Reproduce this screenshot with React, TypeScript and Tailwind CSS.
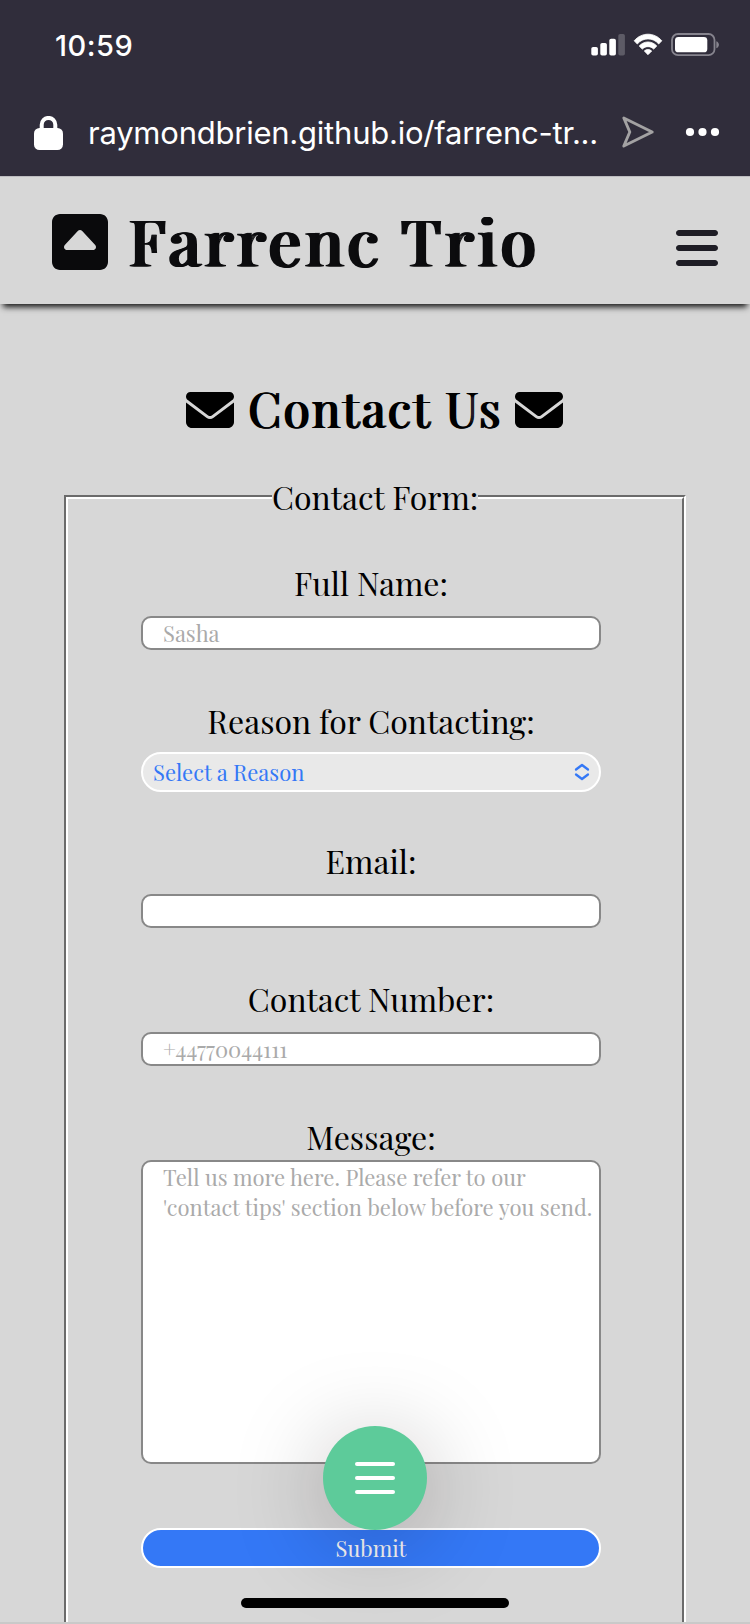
import { FaBars, FaEnvelope, FaSquareCaretUp } from "react-icons/fa6";

const serif = "font-['Playfair_Display','Liberation_Serif',serif]";
const label = "text-center text-[32px] leading-10 whitespace-nowrap";
const field =
  "block h-[34px] w-[460px] rounded-[10px] border-2 border-[#888888] bg-white pl-5 text-[22px] leading-[30px] text-[#aaaaaa] whitespace-nowrap";

function StatusBar() {
  return (
    <div className="flex h-[88px] items-start pl-[55px] pr-[30px] pt-[33px]">
      <span className="mt-[-5px] text-[29px] leading-[36px] font-medium tracking-[0.5px]">10:59</span>
      <svg className="ml-auto" width="130" height="24" viewBox="590 33 130 24" fill="white">
        <rect x="591.3" y="47" width="6.6" height="8.5" rx="1.8" />
        <rect x="600.3" y="43" width="6.6" height="12.5" rx="1.8" />
        <rect x="609.3" y="38.7" width="6.6" height="16.8" rx="1.8" />
        <rect x="618.3" y="34" width="6.6" height="21.5" rx="1.8" opacity="0.22" />
        <path d="M634.2 40.8C641.5 32 654.5 32 661.8 40.8L658.7 44C653 37.2 643 37.2 637.3 44Z" stroke="white" strokeWidth="0.8" strokeLinejoin="round" />
        <path d="M639.2 46C644.2 40.6 651.8 40.6 656.8 46L653.7 49.1C650.5 45.8 645.5 45.8 642.3 49.1Z" stroke="white" strokeWidth="0.8" strokeLinejoin="round" />
        <path d="M644.3 51C646.3 49.1 649.7 49.1 651.7 51L648 54.7Z" stroke="white" strokeWidth="0.8" strokeLinejoin="round" />
        <rect x="672" y="34" width="42.5" height="21.2" rx="6" fill="none" stroke="#86848e" strokeWidth="1.8" />
        <rect x="675" y="37" width="32.3" height="15.3" rx="3.4" />
        <path d="M716.3 41.2C719.8 42.4 719.8 47 716.3 48.2Z" fill="#86848e" />
      </svg>
    </div>
  );
}

function AddressBar() {
  return (
    <div className="flex h-[88px] items-center pr-[30px] pl-[34px]">
      <svg className="mt-0.5" width="29" height="34" viewBox="0 0 29 34" fill="white">
        <rect x="0" y="12" width="29" height="22" rx="5.5" />
        <path d="M7.7 15V8.7a6.8 6.8 0 0 1 13.6 0V15" fill="none" stroke="white" strokeWidth="4" />
      </svg>
      <span className="mt-0.5 ml-[25px] w-[520px] text-[31px] leading-10 tracking-[-0.23px] whitespace-nowrap">raymondbrien.github.io/farrenc-tr...</span>
      <svg className="ml-[13px] shrink-0" width="34" height="34" viewBox="0 0 34 34" fill="none" stroke="#a3a2a3" strokeWidth="2.9" strokeLinejoin="round">
        <path d="M2.8 3L31.2 17L2.8 31L8.8 17Z" />
      </svg>
      <svg className="ml-auto shrink-0" width="35" height="10" viewBox="0 0 35 10" fill="white">
        <circle cx="5" cy="5" r="4.1" />
        <circle cx="17.5" cy="5" r="4.1" />
        <circle cx="30" cy="5" r="4.1" />
      </svg>
    </div>
  );
}

export default function App() {
  return (
    <div className="relative h-[1624px] w-[750px] overflow-hidden bg-[#d7d7d7] text-black">
      <div className="h-[176px] bg-[#302d3b] font-['Inter',sans-serif] text-white">
        <StatusBar />
        <AddressBar />
      </div>

      <header className={`${serif} flex h-32 items-start border-t border-[#bdbcc0] pl-[52px] pr-8 shadow-[0_6px_6px_-3px_rgba(0,0,0,0.9)]`}>
        <FaSquareCaretUp className="mt-[33px] h-16 w-14 text-[#0a0a0c]" />
        <h1 className="mt-[23px] ml-[19px] text-[64px] leading-[80px] font-normal tracking-[4.15px] whitespace-nowrap text-[#0c0c0e] [text-shadow:1px_0_#0c0c0e,2px_0_#0c0c0e,3px_0_#0c0c0e,4px_0_#0c0c0e]">Farrenc Trio</h1>
        <FaBars className="mt-[47px] ml-auto h-12 w-[42px] text-[#1e1d25]" />
      </header>

      <main className={serif}>
        <div className="mt-[80px] ml-[186px] flex h-[52px] w-[377px] items-center justify-between">
          <FaEnvelope className="h-12 w-12" />
          <h2 className="-mt-1 text-[48px] leading-[52px] font-normal tracking-[2.1px] whitespace-nowrap [text-shadow:1px_0_#000,2px_0_#000]">Contact Us</h2>
          <FaEnvelope className="h-12 w-12" />
        </div>

        <form className="mt-[59px] ml-16 h-[1200px] w-[622px] border-2 border-t-[#6b6b6b] border-r-white border-b-white border-l-[#6b6b6b]">
          <div className="h-full border-2 border-t-white border-r-[#6b6b6b] border-b-[#6b6b6b] border-l-white">
            <div className="mx-auto -mt-[22px] w-[206px] bg-[#d7d7d7] text-center text-[32px] leading-10 whitespace-nowrap">Contact Form:</div>
            <div className="ml-[73px] flex w-[460px] flex-col">
              <label className={`${label} mt-[46px]`}>Full Name:</label>
              <div className={`${field} mt-[13px]`}>Sasha</div>

              <label className={`${label} mt-[51px]`}>Reason for Contacting:</label>
              <div className="mt-[11px] flex h-10 items-center rounded-full border-2 border-white bg-[#e9e9e9] pr-[9px] pl-[10px] text-[22px] leading-9 text-[#3478f6]">
                Select a Reason
                <svg className="ml-auto" width="16" height="18" viewBox="0 0 16 18" fill="none" stroke="#3478f6" strokeWidth="2.3" strokeLinecap="round" strokeLinejoin="round">
                  <path d="M2 6.5L8 2L14 6.5M2 11.5L8 16L14 11.5" />
                </svg>
              </div>

              <label className={`${label} mt-[49px]`}>Email:</label>
              <div className={`${field} mt-[13px]`} />

              <label className={`${label} mt-[51px]`}>Contact Number:</label>
              <div className={`${field} mt-[13px]`}>+44770044111</div>

              <label className={`${label} mt-[51px]`}>Message:</label>
              <div className="mt-[3px] h-[304px] rounded-[10px] border-2 border-[#888888] bg-white pl-5 text-[22px] leading-[30px] whitespace-nowrap text-[#aaaaaa]">
                <p>Tell us more here. Please refer to our</p>
                <p>'contact tips' section below before you send.</p>
              </div>

              <button className="mt-16 h-10 rounded-full border-2 border-white bg-[#3478f6] text-center text-[22px] leading-9 text-[#f4f4f4]">Submit</button>
            </div>
          </div>
        </form>
      </main>

      <div className="absolute top-[1426px] left-[323px] flex h-[104px] w-[104px] flex-col items-center justify-center gap-[10px] rounded-full bg-[#5dcb9a] shadow-[0_12px_92px_rgba(20,8,12,0.25)]">
        <span className="h-1 w-10 rounded-full bg-white" />
        <span className="h-1 w-10 rounded-full bg-white" />
        <span className="h-1 w-10 rounded-full bg-white" />
      </div>
      <div className="absolute top-[1598px] left-[241px] h-[10px] w-[268px] rounded-full bg-black" />
      <div className="absolute bottom-0 left-0 h-[2px] w-full bg-[#c9c9c9]" />
    </div>
  );
}
